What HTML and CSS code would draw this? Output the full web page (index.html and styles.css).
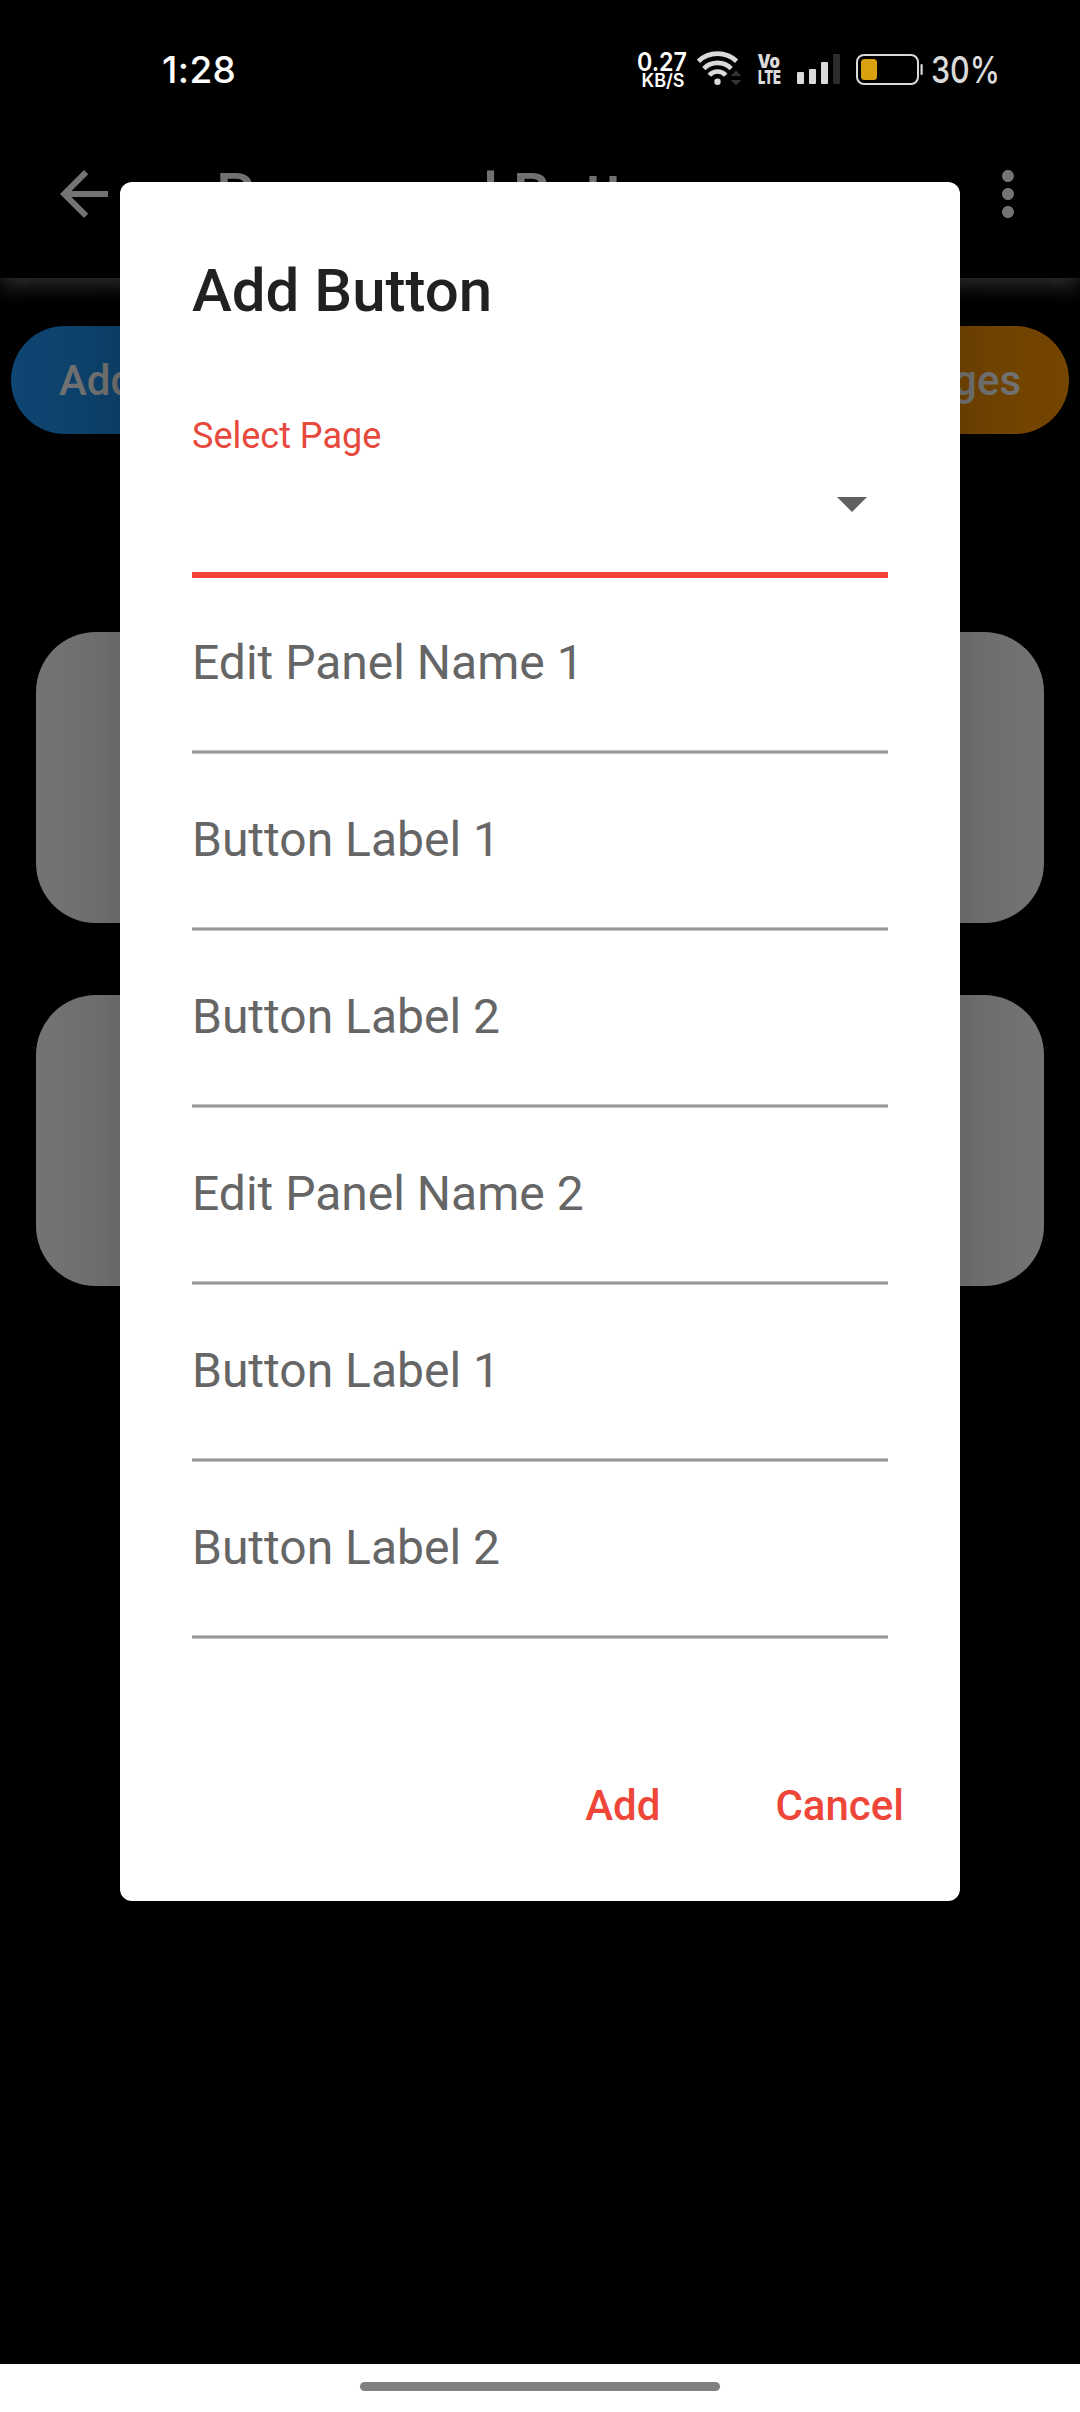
FILE: index.html
```html
<!DOCTYPE html>
<html lang="en">
<head>
<meta charset="utf-8">
<title>Add Button</title>
<link rel="stylesheet" href="styles.css">
</head>
<body>
<div class="screen">
  <main class="page">
    <header class="appbar">
      <svg class="icon" viewBox="0 0 24 24"><path d="M20 11H7.83l5.59-5.59L12 4l-8 8 8 8 1.41-1.41L7.83 13H20v-2z"/></svg>
      <h1 class="appbar-title">Pages and Button</h1>
      <svg class="icon" viewBox="0 0 24 24"><path d="M12 8c1.1 0 2-.9 2-2s-.9-2-2-2-2 .9-2 2 .9 2 2 2zm0 2c-1.1 0-2 .9-2 2s.9 2 2 2 2-.9 2-2-.9-2-2-2zm0 6c-1.1 0-2 .9-2 2s.9 2 2 2 2-.9 2-2-.9-2-2-2z"/></svg>
    </header>
    <div class="actions">
      <button class="pill pill-blue">Add</button>
      <button class="pill pill-orange">Pages</button>
    </div>
    <div class="cards">
      <div class="card"></div>
      <div class="card"></div>
    </div>
  </main>

  <div class="overlay">
    <div class="status">
      <span class="clock">1:28</span>
      <div class="status-right">
        <svg class="speed" width="52" height="40" viewBox="0 0 52 40">
          <text x="1" y="22.800" font-size="25" textLength="50" lengthAdjust="spacingAndGlyphs">0.27</text>
          <text x="5.500" y="39" font-size="18" textLength="43" lengthAdjust="spacingAndGlyphs">KB/S</text>
        </svg>
        <svg class="wifi" width="46" height="36" viewBox="0 0 46 36">
          <g fill="none" stroke="#dadada" stroke-width="4.600">
            <path d="M1.400 11.200a28 28 0 0 1 38.200 0"/>
            <path d="M6.800 18.600a19.300 19.300 0 0 1 27.400 0"/>
            <path d="M12.300 25.300a10.700 10.700 0 0 1 16.400 0"/>
          </g>
          <circle cx="20.500" cy="31.700" r="3.200" fill="#dadada"/>
          <path d="M33.700 26l5.300-5.500 5.300 5.500zM33.700 30l5.300 5.200 5.300-5.200z" fill="#333"/>
        </svg>
        <svg class="volte" width="25" height="36" viewBox="0 0 25 36">
          <text x="0.500" y="18" font-size="19" textLength="22.500" lengthAdjust="spacingAndGlyphs">Vo</text>
          <text x="1" y="34" font-size="19" textLength="23" lengthAdjust="spacingAndGlyphs">LTE</text>
        </svg>
        <svg class="signal" width="43" height="31" viewBox="0 0 43 31">
          <g fill="#dadada"><rect x="0" y="18" width="7" height="12" rx="1"/><rect x="12" y="15" width="7" height="15" rx="1"/><rect x="24" y="8" width="7" height="22" rx="1"/></g>
          <rect x="36" y="0" width="7" height="30" rx="1" fill="#2c2c2c"/>
        </svg>
        <svg class="battery" width="68" height="32" viewBox="0 0 68 32">
          <rect x="1" y="1" width="61" height="29" rx="7" fill="none" stroke="#dadada" stroke-width="2"/>
          <rect x="5" y="5" width="16" height="21" rx="3.500" fill="#d9a010"/>
          <rect x="64.500" y="10" width="2.200" height="11" rx="1.100" fill="#dadada"/>
        </svg>
        <svg class="percent" width="69" height="44" viewBox="0 0 69 44">
          <text x="0" y="35" font-size="37" textLength="69" lengthAdjust="spacingAndGlyphs">30%</text>
        </svg>
      </div>
    </div>

    <section class="dialog">
      <h2 class="dialog-title">Add Button</h2>
      <div class="select">
        <span class="select-label">Select Page</span>
        <svg class="icon caret" viewBox="0 0 24 24"><path d="M7 10l5 5 5-5z"/></svg>
      </div>
      <div class="field">Edit Panel Name 1</div>
      <div class="field">Button Label 1</div>
      <div class="field">Button Label 2</div>
      <div class="field">Edit Panel Name 2</div>
      <div class="field">Button Label 1</div>
      <div class="field">Button Label 2</div>
      <div class="dialog-actions">
        <button class="text-btn">Add</button>
        <button class="text-btn">Cancel</button>
      </div>
    </section>
  </div>

  <footer class="nav"><div class="handle"></div></footer>
</div>
</body>
</html>
```
FILE: styles.css
```css
* { box-sizing: border-box; margin: 0; padding: 0; }
body { background: #000; font-family: Roboto, sans-serif; }
button { border: 0; background: none; font: inherit; }

.screen { position: relative; width: 1080px; height: 2412px; display: flex; flex-direction: column; overflow: hidden; }
.page { flex: 1; background: #000; }
.icon { width: 72px; height: 72px; flex: none; display: block; }

.appbar {
  position: relative; height: 278px; padding: 110px 36px 0 48px; display: flex; align-items: center;
  background: #000; box-shadow: 0 6px 22px #777; fill: #fff;
}
.appbar-title { flex: 1; margin-left: 96px; padding-top: 2px; font-size: 60px; font-weight: 500; line-height: 72px; color: #fff; }

.actions { display: flex; justify-content: space-between; padding: 48px 11px 0; }
.pill { width: 330px; height: 108px; border-radius: 54px; padding: 0 48px; font-size: 42px; font-weight: 500; color: #fff; }
.pill-blue { background: #2196f3; text-align: left; }
.pill-orange { background: #ff9800; text-align: right; }
.cards { display: flex; flex-direction: column; gap: 72px; padding: 198px 36px 0; }
.card { height: 291px; border-radius: 60px; background: #fff; }

/* Modal layer: scrim, status icons and dialog */
.overlay {
  position: absolute; top: 0; left: 0; width: 1080px; height: 2364px;
  background: rgba(0, 0, 0, .54); display: flex; flex-direction: column; align-items: center;
}
.status { width: 100%; height: 182px; padding: 48px 80px 0 162px; display: flex; justify-content: space-between; align-items: flex-start; color: #fff; font-family: Inter, sans-serif; }
.clock { font-size: 37px; font-weight: 500; line-height: 44px; letter-spacing: .4px; }
.status-right { display: flex; align-items: flex-start; }
.status-right svg { overflow: visible; }
.speed { fill: #fff; font-weight: 600; }
.wifi { margin: 2px 0 0 9px; }
.volte { margin: 2px 0 0 14px; fill: #dadada; font-weight: 900; }
.signal { margin: 6px 0 0 15px; }
.battery { margin: 6px 0 0 16px; }
.percent { margin-left: 7px; fill: #dadada; font-weight: 500; }

.dialog {
  width: 840px; height: 1719px; border-radius: 12px; background: #fff; padding: 73px 72px 0;
  display: flex; flex-direction: column;
  box-shadow: 0 33px 45px -21px rgba(0, 0, 0, .15), 0 72px 114px 3px rgba(0, 0, 0, .1), 0 27px 110px 6px rgba(0, 0, 0, .08);
}
.dialog-title { font-size: 60px; font-weight: 500; line-height: 72px; color: #212121; }
.select { height: 251px; padding-top: 88px; border-bottom: 6px solid #f44336; display: flex; flex-direction: column; }
.select-label { font-size: 36px; line-height: 42px; color: #e8493d; }
.caret { align-self: flex-end; margin-top: 10px; fill: #616161; }
/* The underline is a 3px rule that falls between pixels, so its edges are lighter */
.field {
  height: 177px; padding: 57px 0; font-size: 48px; line-height: 56px; color: #666;
  background: linear-gradient(#c4c4c4 1px, #999 1px, #999 3px, #c4c4c4 3px) 0 172px / 100% 4px no-repeat;
}
.dialog-actions { display: flex; justify-content: flex-end; gap: 19px; margin: 112px -64px 0 0; }
.text-btn { padding: 0 48px; font-size: 42px; font-weight: 500; line-height: 108px; color: #ee4639; }

.nav { height: 48px; background: #fff; display: flex; justify-content: center; padding-top: 18px; }
.handle { width: 360px; height: 9px; border-radius: 5px; background: #808080; }
```
